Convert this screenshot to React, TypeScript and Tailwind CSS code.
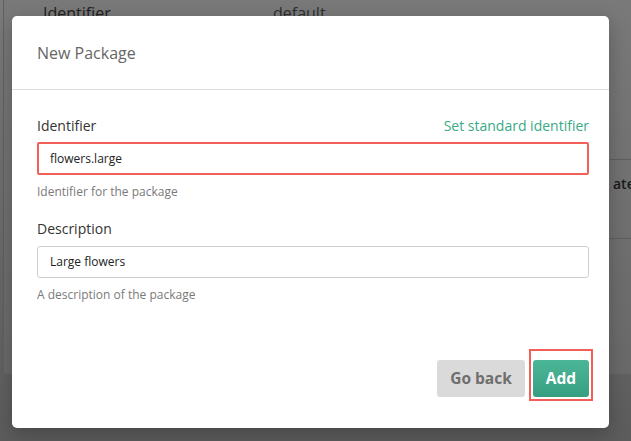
export default function App() {
  return (
    <div className="relative w-[631px] h-[441px] overflow-hidden bg-gradient-to-b from-[#7b7b7b] to-[#5c5c5c] font-['Open_Sans',sans-serif]">
      {/* page behind the dimmed overlay */}
      <div className="absolute left-[3px] -top-[20px] w-[700px] h-[395px] rounded-[4px] border border-[#606060] bg-[#787878]/40">
        <div className="flex h-[58px] items-center text-[16px] text-[#1e1e1e] pt-[6px]">
          <span className="ml-[39px] w-[230px]">Identifier</span>
          <span className="text-[#2e2e2e]">default</span>
        </div>
        <div className="absolute left-[606px] top-[178px] w-[100px] h-[80px] border-y border-[#5e5e5e] pt-[14px] text-[14px] leading-[20px] text-[#1a1a1a]">
          <span className="ml-[3px] font-semibold">ate</span>
        </div>
      </div>

      {/* modal */}
      <div className="absolute left-[12px] top-[16px] w-[597px] h-[412px] bg-white rounded-[5px] shadow-[0_6px_20px_rgba(0,0,0,0.25)] flex flex-col">
        <div className="h-[74px] flex items-center px-[25px] border-b border-[#dedede]">
          <h2 className="text-[16px] text-[#666]">New Package</h2>
        </div>
        <div className="flex-1 flex flex-col px-[25px] pr-[20px] pt-[24px] pb-[31px]">
          <div className="flex items-center justify-between h-[22px]">
            <label className="text-[14px] text-[#333]">Identifier</label>
            <span className="text-[14px] text-[#3aa985]">Set standard identifier</span>
          </div>
          <div className="mt-[6px] h-[33px] rounded-[2px] border-2 border-[#f25f57] flex items-center px-[11px] text-[12px] text-[#222]">
            flowers.large
          </div>
          <p className="mt-[8px] text-[12px] leading-[18px] text-[#7a7a7a]">Identifier for the package</p>

          <label className="mt-[16px] h-[22px] flex items-center text-[14px] text-[#333]">Description</label>
          <div className="mt-[7px] h-[32px] rounded-[3px] border border-[#cfcfcf] flex items-center px-[12px] text-[12px] text-[#222]">
            Large flowers
          </div>
          <p className="mt-[8px] text-[12px] leading-[18px] text-[#7a7a7a]">A description of the package</p>

          <div className="mt-auto flex justify-end gap-[8px]">
            <button className="w-[88px] h-[37px] rounded-[3px] bg-[#dadada] text-[15.5px] font-bold text-[#6e6e6e]">
              Go back
            </button>
            <div className="relative">
              <div className="absolute -left-[4px] -right-[4px] -top-[11px] -bottom-[4px] border-2 border-[#f25f57]" />
              <button className="relative w-[56px] h-[37px] rounded-[3px] bg-gradient-to-b from-[#4bb697] to-[#379f81] text-[15.5px] font-bold text-white">
                Add
              </button>
            </div>
          </div>
        </div>
      </div>
    </div>
  );
}
